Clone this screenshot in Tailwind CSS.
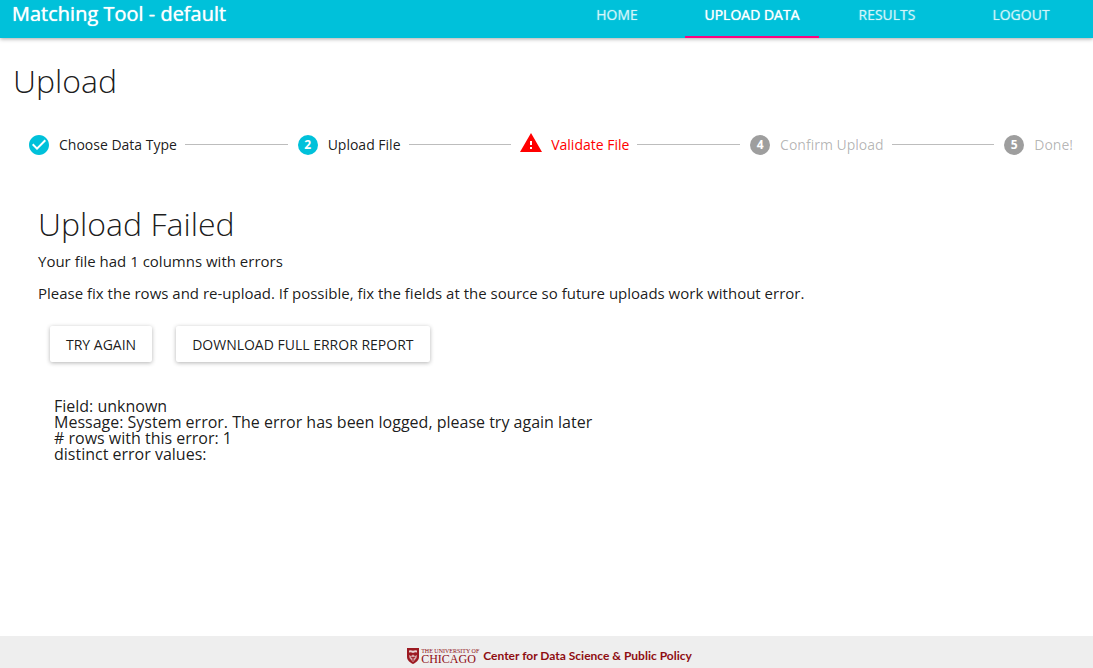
<!DOCTYPE html>
<html lang="en">
<head>
<meta charset="utf-8">
<meta name="viewport" content="width=device-width, initial-scale=1">
<title>Matching Tool - default</title>
<script src="https://cdn.jsdelivr.net/npm/@tailwindcss/browser@4"></script>
</head>
<body class="flex min-h-screen flex-col bg-white font-['Open_Sans','Noto_Sans',sans-serif] text-black/90">
  <header class="relative flex h-[38px] items-start justify-between bg-[#00c1da] pr-[5px] pl-3 text-white shadow-[0_1px_4px_rgba(0,0,0,0.35)]">
    <span class="text-xl leading-7 font-medium text-shadow-[0_0_1px_currentColor]">Matching Tool - default</span>
    <nav class="flex h-full text-sm leading-[30px] font-medium text-shadow-[0_0_1px_currentColor]">
      <a href="#" class="w-[134px] text-center text-white/65">HOME</a>
      <a href="#" aria-current="page" class="mx-px w-[134px] border-b-2 border-[#ff0080] text-center">UPLOAD DATA</a>
      <a href="#" class="w-[134px] text-center text-white/65">RESULTS</a>
      <a href="#" class="w-[134px] text-center text-white/65">LOGOUT</a>
    </nav>
  </header>

  <main class="flex-1">
    <h1 class="px-[13px] pt-[23px] text-[32px] leading-10 font-light">Upload</h1>

    <ol class="mt-[26px] flex h-9 items-center pr-5 pl-[27px] text-sm">
      <li class="flex items-center gap-2">
        <svg class="size-6" viewBox="0 0 24 24" fill="#00c1da"><path d="M12 2C6.480 2 2 6.480 2 12s4.480 10 10 10 10-4.480 10-10S17.520 2 12 2zm-2 15l-5-5 1.410-1.410L10 14.170l7.590-7.590L19 8l-9 9z"/></svg>
        Choose Data Type
      </li>
      <li aria-hidden="true" class="mx-2 h-0.5 flex-1 border-t border-[#bdbdbd]"></li>
      <li class="flex items-center gap-2">
        <span class="mx-0.5 flex size-5 items-center justify-center rounded-full bg-[#00c1da] text-xs font-bold text-white">2</span>
        Upload File
      </li>
      <li aria-hidden="true" class="mx-2 h-0.5 flex-1 border-t border-[#bdbdbd]"></li>
      <li class="flex items-center gap-2 text-[#ff0000]">
        <svg class="mb-1 size-6" viewBox="0 0 24 24" fill="#ff0000"><path d="M1 21h22L12 2 1 21zm12-3h-2v-2h2v2zm0-4h-2v-4h2v4z"/></svg>
        Validate File
      </li>
      <li aria-hidden="true" class="mx-2 h-0.5 flex-1 border-t border-[#bdbdbd]"></li>
      <li class="flex items-center gap-2 text-black/30">
        <span class="mx-0.5 flex size-5 items-center justify-center rounded-full bg-[#9e9e9e] text-xs font-bold text-white">4</span>
        Confirm Upload
      </li>
      <li aria-hidden="true" class="mx-2 h-0.5 flex-1 border-t border-[#bdbdbd]"></li>
      <li class="flex items-center gap-2 text-black/30">
        <span class="mx-0.5 flex size-5 items-center justify-center rounded-full bg-[#9e9e9e] text-xs font-bold text-white">5</span>
        Done!
      </li>
    </ol>

    <section class="px-[38px] pt-[41px]">
      <h2 class="text-[32px] leading-10 font-light">Upload Failed</h2>
      <p class="mt-[7px] text-[15px] leading-5">Your file had 1 columns with errors</p>
      <p class="mt-3 text-[15px] leading-5">Please fix the rows and re-upload. If possible, fix the fields at the source so future uploads work without error.</p>
      <div class="mt-[23px] flex gap-6 px-3">
        <button type="button" class="h-9 rounded-xs px-4 pt-0.5 text-sm shadow-[0_1px_4px_rgba(0,0,0,0.3)]">TRY AGAIN</button>
        <button type="button" class="h-9 rounded-xs px-4 pt-0.5 text-sm shadow-[0_1px_4px_rgba(0,0,0,0.3)]">DOWNLOAD FULL ERROR REPORT</button>
      </div>
      <div class="mt-9 px-4 text-base leading-4">
        <p>Field: unknown</p>
        <p>Message: System error. The error has been logged, please try again later</p>
        <p># rows with this error: 1</p>
        <p>distinct error values:</p>
      </div>
    </section>
  </main>

  <footer class="flex h-8 items-center justify-center gap-1 bg-[#eeeeee] pt-2 pl-1.5 text-[#8f0d12]">
    <span class="flex items-center gap-0.5">
      <svg class="h-4 w-3" viewBox="0 0 12 16"><path d="M0 0h12v9c0 3.500-3 5.500-6 7-3-1.500-6-3.500-6-7z" fill="#9c1a22"/><path d="M2 2.500q2-.8 4 .3 2-1.100 4-.3v2q-2-.6-4 .5-2-1.100-4-.5z" fill="#e9cfd0"/><path d="M2 7l2 1 2-1.500L8 8l2-1-.5 3L7 13l-1 1-1-1-2.500-3z" fill="#d6a7aa"/><path d="M4 9l2 1 2-1M6 9v4" fill="none" stroke="#9c1a22"/></svg>
      <span class="flex flex-col font-['Liberation_Serif',serif]">
        <span class="text-[6px] leading-[6px]">THE UNIVERSITY OF</span>
        <span class="text-xs leading-[10px]">CHICAGO</span>
      </span>
    </span>
    <span class="font-[Lato,sans-serif] text-xs font-bold">Center for Data Science &amp; Public Policy</span>
  </footer>
</body>
</html>
